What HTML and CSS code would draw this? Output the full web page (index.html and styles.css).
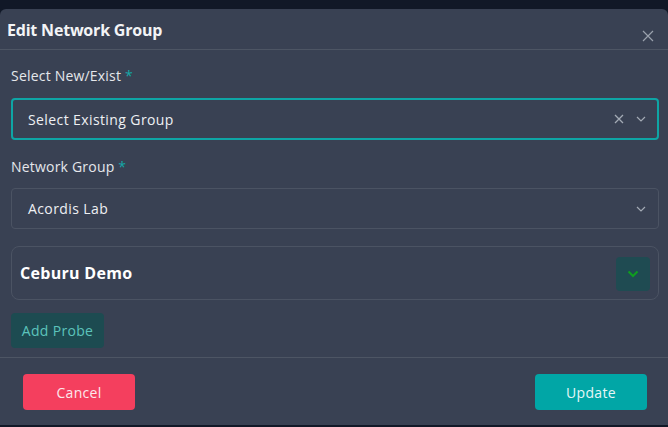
FILE: index.html
```html
<!DOCTYPE html>
<html lang="en">
<head>
<meta charset="utf-8">
<title>Edit Network Group</title>
<link rel="stylesheet" href="styles.css">
</head>
<body>
<div class="modal">
  <div class="modal-header">
    <h2 class="modal-title">Edit Network Group</h2>
    <button class="close-btn" aria-label="Close">
      <svg width="12" height="12" viewBox="0 0 12 12"><path d="M1 1L11 11M11 1L1 11" stroke="#9aa1ad" stroke-width="1.2" fill="none"/></svg>
    </button>
  </div>
  <div class="modal-body">
    <div class="field">
      <label class="label">Select New/Exist <span class="req">*</span></label>
      <div class="select focused">
        <span class="select-value">Select Existing Group</span>
        <span class="select-icons">
          <svg class="clear" width="10" height="10" viewBox="0 0 10 10"><path d="M1 1L9 9M9 1L1 9" stroke="#a3aab5" stroke-width="1.3" fill="none"/></svg>
          <svg class="chev" width="10" height="6" viewBox="0 0 10 6"><path d="M1 1L5 5L9 1" stroke="#a3aab5" stroke-width="1.2" fill="none"/></svg>
        </span>
      </div>
    </div>
    <div class="field">
      <label class="label">Network Group <span class="req">*</span></label>
      <div class="select">
        <span class="select-value">Acordis Lab</span>
        <span class="select-icons">
          <svg class="chev" width="10" height="6" viewBox="0 0 10 6"><path d="M1 1L5 5L9 1" stroke="#a3aab5" stroke-width="1.2" fill="none"/></svg>
        </span>
      </div>
    </div>
    <div class="card">
      <span class="card-title">Ceburu Demo</span>
      <button class="toggle-btn" aria-label="Expand">
        <svg width="12" height="8" viewBox="0 0 12 8"><path d="M1.5 1.5L6 6L10.5 1.5" stroke="#0f9d1f" stroke-width="2" fill="none"/></svg>
      </button>
    </div>
    <button class="add-btn">Add Probe</button>
  </div>
  <div class="modal-footer">
    <button class="btn btn-cancel">Cancel</button>
    <button class="btn btn-update">Update</button>
  </div>
</div>
</body>
</html>
```
FILE: styles.css
```css
html, body {
  margin: 0;
  padding: 0;
  background: #111827;
  width: 668px;
  height: 427px;
  overflow: hidden;
  font-family: "Open Sans", "Noto Sans", sans-serif;
}
.modal {
  margin-top: 9px;
  width: 668px;
  height: 416px;
  background: #394153;
  border-radius: 6px 6px 0 0;
  display: flex;
  flex-direction: column;
  box-sizing: border-box;
}
.modal-header {
  display: flex;
  justify-content: space-between;
  align-items: flex-start;
  height: 41px;
  border-bottom: 1px solid #4d5564;
  box-sizing: border-box;
}
.modal-title {
  margin: 0;
  padding: 10px 0 0 7px;
  font-size: 16px;
  font-weight: 700;
  color: #f3f4f6;
  letter-spacing: -0.2px;
}
.close-btn {
  background: none;
  border: 0;
  padding: 0;
  margin: 21px 14px 0 0;
  width: 12px;
  height: 12px;
  display: flex;
}
.modal-body {
  padding: 16px 9px 9px 11px;
  border-bottom: 1px solid #4d5564;
}
.field {
  margin-bottom: 17px;
}
.label {
  display: block;
  font-size: 14px;
  letter-spacing: 0.2px;
  color: #e5e7eb;
  line-height: 20px;
  margin-bottom: 12px;
}
.field + .field .label { margin-bottom: 11px; }
.req {
  color: #14a8a8;
}
.select {
  height: 41px;
  box-sizing: border-box;
  border: 1px solid #4b5363;
  border-radius: 4px;
  display: flex;
  align-items: center;
  justify-content: space-between;
  padding: 0 12px 0 16px;
}
.select.focused {
  border: 2px solid #0ea5a5;
  height: 42px;
  padding-left: 15px;
  padding-right: 11px;
}
.select-value {
  font-size: 14px;
  letter-spacing: 0.4px;
  color: #eef0f3;
}
.select-icons {
  display: flex;
  align-items: center;
  gap: 12px;
}
.card {
  height: 54px;
  box-sizing: border-box;
  border: 1px solid #4b5363;
  border-radius: 8px;
  display: flex;
  align-items: center;
  justify-content: space-between;
  padding: 0 8px 0 8px;
}
.card-title {
  font-size: 16px;
  font-weight: 700;
  letter-spacing: 0.3px;
  color: #ffffff;
}
.toggle-btn {
  width: 34px;
  height: 34px;
  border: 0;
  border-radius: 4px;
  background: #1f4b52;
  display: flex;
  align-items: center;
  justify-content: center;
  padding: 0;
  margin-top: 1px;
}
.add-btn {
  display: block;
  margin-top: 13px;
  height: 35px;
  width: 93px;
  padding: 0;
  border: 0;
  border-radius: 4px;
  background: #1d4b51;
  color: #5cc3bc;
  font-family: inherit;
  font-size: 14px;
  letter-spacing: 0.3px;
}
.modal-footer {
  flex: 1;
  display: flex;
  justify-content: space-between;
  align-items: flex-start;
  padding: 16px 21px 0 23px;
  box-sizing: border-box;
}
.btn {
  width: 112px;
  height: 36px;
  border: 0;
  border-radius: 4px;
  color: #fce7ec;
  font-family: inherit;
  font-size: 14px;
  letter-spacing: 0.3px;
}
.btn-cancel { background: #f43f5e; }
.btn-update { background: #01a6a6; color: #e6f7f7; }
```
